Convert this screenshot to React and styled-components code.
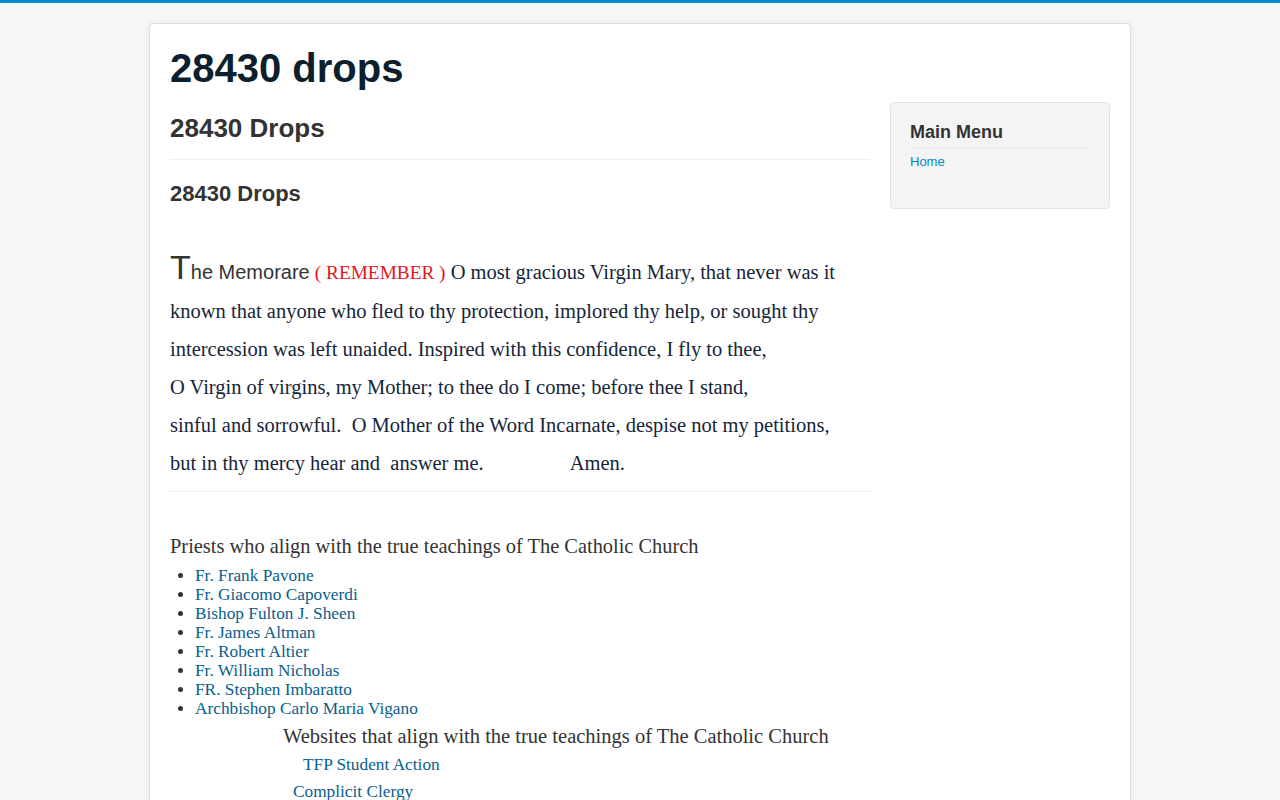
import React from 'react'
import styled, { createGlobalStyle } from 'styled-components'

const GlobalStyle = createGlobalStyle`
  html, body {
    margin: 0;
    padding: 0;
  }
  body {
    background: #f4f6f7;
    border-top: 3px solid #0088cc;
    padding: 20px 0;
    font-family: "Liberation Sans", Arial, sans-serif;
    font-size: 13px;
    line-height: 18px;
    color: #333;
  }
`

const Container = styled.div`
  width: 940px;
  margin: 0 auto;
  padding: 20px;
  background: #fff;
  border: 1px solid #dedede;
  border-radius: 4px;
  box-shadow: 0 0 6px rgba(0, 0, 0, 0.05);
`

const SiteTitle = styled.h1`
  margin: 0;
  font-size: 40px;
  line-height: 48px;
  font-weight: bold;
  color: #0c1f2c;
`

const Row = styled.div`
  display: grid;
  grid-template-columns: 700px 220px;
  column-gap: 20px;
  margin-top: 10px;
  align-items: start;
`

const Main = styled.main`
  min-width: 0;
`

const PageHeader = styled.h2`
  margin: 11px 0 0;
  padding-bottom: 16px;
  border-bottom: 1px solid #eee;
  font-size: 26px;
  line-height: 30px;
  font-weight: bold;
  color: #333;
`

const ArticleTitle = styled.h3`
  margin: 20px 0 40px;
  font-size: 22px;
  line-height: 28px;
  font-weight: bold;
  color: #333;
`

const Prayer = styled.p`
  margin: 0;
  padding-bottom: 9px;
  border-bottom: 1px solid #eee;
  font-family: "Liberation Serif", "Times New Roman", serif;
  font-size: 20.5px;
  line-height: 38px;
  color: #15253a;
  white-space: pre-wrap;
`

const DropCap = styled.span`
  font-family: "Liberation Sans Narrow", "Liberation Sans", Arial, sans-serif;
  font-size: 34px;
  color: #333;
`

const Lead = styled.span`
  font-family: "Liberation Sans Narrow", "Liberation Sans", Arial, sans-serif;
  font-size: 20px;
  color: #333;
`

const Red = styled.span`
  font-size: 19.3px;
  color: #e2161f;
`

const Serif = styled.div`
  font-family: "Liberation Serif", "Times New Roman", serif;
  color: #333;
`

const ListTitle = styled.p`
  margin: 43px 0 9px;
  font-size: 20.4px;
  line-height: 22px;
`

const Priests = styled.ul`
  margin: 0;
  padding-left: 25px;
  font-size: 17.3px;
  line-height: 19px;
`

const Link = styled.a`
  color: #0a5e8b;
  text-decoration: none;
`

const Indented = styled.p`
  margin: ${props => props.top || 0}px 0 0;
  padding-left: ${props => props.indent}px;
  font-size: ${props => props.size}px;
  line-height: ${props => props.lh}px;
`

const Sidebar = styled.aside`
  background: #f4f4f4;
  border: 1px solid #e3e3e3;
  border-radius: 4px;
  padding: 19px 19px 36px;
`

const ModuleTitle = styled.h3`
  margin: 0 0 4px;
  padding-bottom: 5px;
  border-bottom: 1px solid #eaeaea;
  font-size: 18px;
  line-height: 20px;
  font-weight: bold;
  color: #333;
`

const Menu = styled.ul`
  list-style: none;
  margin: 0;
  padding: 0;
  font-size: 13px;
  line-height: 20px;

  a {
    color: #0088cc;
    text-decoration: none;
  }
`

const priests = [
  'Fr. Frank Pavone',
  'Fr. Giacomo Capoverdi',
  'Bishop Fulton J. Sheen',
  'Fr. James Altman',
  'Fr. Robert Altier',
  'Fr. William Nicholas',
  'FR. Stephen Imbaratto',
  'Archbishop Carlo Maria Vigano',
]

const App = () => (
  <>
    <GlobalStyle />
    <Container>
      <SiteTitle>28430 drops</SiteTitle>
      <Row>
        <Main>
          <PageHeader>28430 Drops</PageHeader>
          <ArticleTitle>28430 Drops</ArticleTitle>
          <Prayer>
            <DropCap>T</DropCap>
            <Lead>he Memorare</Lead> <Red>( REMEMBER )</Red> O most gracious Virgin Mary, that never was it
            known that anyone who fled to thy protection, implored thy help, or sought thy intercession was left
            unaided. Inspired with this confidence, I fly to thee,
            <br />O Virgin of virgins, my Mother; to thee do I come; before thee I stand,
            <br />sinful and sorrowful.{'  '}O Mother of the Word Incarnate, despise not my petitions,
            <br />but in thy mercy hear and{'  '}answer me.{'                 '}Amen.
          </Prayer>
          <Serif>
            <ListTitle>Priests who align with the true teachings of The Catholic Church</ListTitle>
            <Priests>
              {priests.map(name => (
                <li key={name}>
                  <Link href="#">{name}</Link>
                </li>
              ))}
            </Priests>
            <Indented top={3} indent={113} size={20.5} lh={30}>
              Websites that align with the true teachings of The Catholic Church
            </Indented>
            <Indented indent={133} size={17.3} lh={28}>
              <Link href="#">TFP Student Action</Link>
            </Indented>
            <Indented indent={123} size={17.3} lh={26}>
              <Link href="#">Complicit Clergy</Link>
            </Indented>
          </Serif>
        </Main>
        <Sidebar>
          <ModuleTitle>Main Menu</ModuleTitle>
          <Menu>
            <li>
              <a href="#">Home</a>
            </li>
          </Menu>
        </Sidebar>
      </Row>
    </Container>
  </>
)

export default App
